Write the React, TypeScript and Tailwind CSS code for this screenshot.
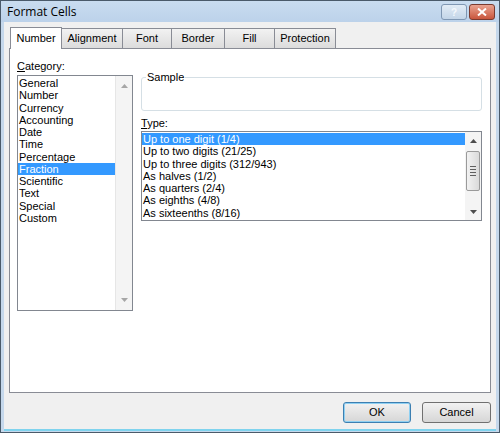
import React from 'react';

const categories = [
  'General',
  'Number',
  'Currency',
  'Accounting',
  'Date',
  'Time',
  'Percentage',
  'Fraction',
  'Scientific',
  'Text',
  'Special',
  'Custom',
];

const types = [
  'Up to one digit (1/4)',
  'Up to two digits (21/25)',
  'Up to three digits (312/943)',
  'As halves (1/2)',
  'As quarters (2/4)',
  'As eighths (4/8)',
  'As sixteenths (8/16)',
];

const tabs = ['Number', 'Alignment', 'Font', 'Border', 'Fill', 'Protection'];
const tabWidths = ['w-[52px]', 'w-[61px]', 'w-[49px]', 'w-[53px]', 'w-[50px]', 'w-[61px]'];

const ArrowUp = ({ color = '#4d4d4d' }: { color?: string }) => (
  <svg width="7" height="4" viewBox="0 0 7 4">
    <path d="M0 4 L3.5 0 L7 4 Z" fill={color} />
  </svg>
);

const ArrowDown = ({ color = '#4d4d4d' }: { color?: string }) => (
  <svg width="7" height="4" viewBox="0 0 7 4">
    <path d="M0 0 L3.5 4 L7 0 Z" fill={color} />
  </svg>
);

const App: React.FC = () => {
  return (
    <div
      className="w-[500px] h-[433px] flex flex-col border border-[#4a5a6a] bg-[#c5d8ec] text-[11px] text-black overflow-hidden"
      style={{ fontFamily: 'Tahoma, "Liberation Sans", Arial, sans-serif' }}
    >
      {/* title bar */}
      <div className="h-[21px] flex items-center justify-between pl-[6px] pr-[4px] bg-gradient-to-b from-[#c9dcf0] to-[#bcd2ea]">
        <span className="text-[12px] text-black" style={{ fontFamily: '"Open Sans", "Noto Sans", sans-serif' }}>
          Format Cells
        </span>
        <div className="flex items-center gap-[2px] pt-[1px]">
          <div className="w-[26px] h-[16px] rounded-[3px] border border-[#7f97b3] bg-gradient-to-b from-[#e2ecf6] to-[#c3d5e8] flex items-center justify-center text-[10px] font-bold text-[#f4f8fc]">
            ?
          </div>
          <div className="w-[26px] h-[16px] rounded-[3px] border border-[#7a3b30] bg-gradient-to-b from-[#e9a391] to-[#c8553c] flex items-center justify-center">
            <svg width="10" height="8" viewBox="0 0 10 8">
              <path d="M1 0.5 L9 7.5 M9 0.5 L1 7.5" stroke="#ffffff" strokeWidth="2" />
            </svg>
          </div>
        </div>
      </div>

      {/* client area */}
      <div className="flex-1 flex flex-col bg-[#f0f0f0] mx-[3px] mb-[1px] border-b-2 border-[#7fd3ee]">
        {/* tabs */}
        <div className="flex items-end pl-[6px] pt-[4px] h-[26px]">
          {tabs.map((t, i) =>
            i === 0 ? (
              <div
                key={t}
                className={`${tabWidths[i]} h-[22px] bg-white border border-b-0 border-[#898c95] flex items-center justify-center relative z-10 -mb-[1px]`}
              >
                {t}
              </div>
            ) : (
              <div
                key={t}
                className={`${tabWidths[i]} h-[20px] border border-b-0 border-l-0 border-[#898c95] bg-gradient-to-b from-[#f2f2f2] to-[#dcdcdc] flex items-center justify-center ${i === 1 ? 'border-l' : ''}`}
              >
                {t}
              </div>
            )
          )}
        </div>

        {/* panel */}
        <div className="mx-[5px] h-[345px] bg-white border border-[#898c95] flex pt-[10px] pl-[7px]">
          {/* left column */}
          <div className="w-[116px] flex flex-col">
            <div className="h-[15px] leading-[15px]">
              <span className="underline">C</span>ategory:
            </div>
            <div className="mt-[1px] h-[236px] border border-[#828790] flex">
              <div className="flex-1 pt-[1px]">
                {categories.map((c) => (
                  <div
                    key={c}
                    className={`h-[12.25px] leading-[12px] pl-[1px] ${
                      c === 'Fraction' ? 'bg-[#3399ff] text-white' : ''
                    }`}
                  >
                    {c}
                  </div>
                ))}
              </div>
              <div className="w-[17px] bg-[#f4f4f4] border-l border-[#e6e6e6] flex flex-col items-center justify-between py-[8px]">
                <ArrowUp color="#a6a6a6" />
                <ArrowDown color="#a6a6a6" />
              </div>
            </div>
          </div>

          {/* right column */}
          <div className="ml-[8px] w-[341px] flex flex-col">
            {/* sample group */}
            <div className="mt-[18px] h-[34px] border border-[#d5dfe5] rounded-[3px] relative">
              <span className="absolute -top-[8px] left-[4px] bg-white px-[1px] leading-[14px]">Sample</span>
            </div>
            <div className="mt-[5px] h-[14px] leading-[14px]">
              <span className="underline">T</span>ype:
            </div>
            <div className="mt-[1px] h-[90px] border border-[#828790] flex">
              <div className="flex-1 pt-[1px]">
                {types.map((t, i) => (
                  <div
                    key={t}
                    className={`h-[12.3px] leading-[12px] pl-[1px] ${i === 0 ? 'bg-[#3399ff] text-white' : ''}`}
                  >
                    {t}
                  </div>
                ))}
              </div>
              <div className="w-[16px] bg-[#f4f4f4] flex flex-col items-center">
                <div className="h-[17px] flex items-center justify-center">
                  <ArrowUp />
                </div>
                <div className="w-[14px] h-[40px] mt-[2px] rounded-[2px] border border-[#9a9a9a] bg-gradient-to-r from-[#f2f2f2] to-[#dadada] flex flex-col items-center justify-center gap-[2px]">
                  <div className="w-[6px] h-[1px] bg-[#5f5f5f]" />
                  <div className="w-[6px] h-[1px] bg-[#5f5f5f]" />
                  <div className="w-[6px] h-[1px] bg-[#5f5f5f]" />
                  <div className="w-[6px] h-[1px] bg-[#5f5f5f]" />
                </div>
                <div className="flex-1" />
                <div className="h-[17px] flex items-center justify-center">
                  <ArrowDown />
                </div>
              </div>
            </div>
          </div>
        </div>

        {/* buttons */}
        <div className="flex justify-end gap-[11px] pr-[5px] pt-[9px]">
          <button className="w-[68px] h-[21px] rounded-[3px] border border-[#3c7fb1] bg-gradient-to-b from-[#f2f2f2] to-[#d6d6d6] shadow-[inset_0_0_0_1px_#8fd0f2] text-[11px]">
            OK
          </button>
          <button className="w-[69px] h-[21px] rounded-[3px] border border-[#707070] bg-gradient-to-b from-[#f2f2f2] to-[#d6d6d6] text-[11px]">
            Cancel
          </button>
        </div>
      </div>
    </div>
  );
};

export default App;
